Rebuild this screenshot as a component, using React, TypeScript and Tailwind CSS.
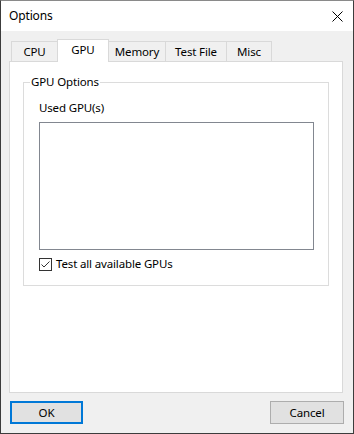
import React from "react";

const tabs = [
  { label: "CPU", cls: "w-[46px] border-l" },
  { label: "GPU", cls: "w-[52px] border-l border-r", active: true },
  { label: "Memory", cls: "w-[57px] border-r" },
  { label: "Test File", cls: "w-[61px] border-r" },
  { label: "Misc", cls: "w-[45px] border-r" },
];

function CloseIcon() {
  return (
    <svg width="11" height="11" viewBox="0 0 11 11" className="block">
      <path d="M0.5 0.5 L10.5 10.5 M10.5 0.5 L0.5 10.5" stroke="#000" strokeWidth="1" fill="none" />
    </svg>
  );
}

function CheckBox() {
  return (
    <span className="flex h-[13px] w-[13px] shrink-0 items-center justify-center border border-[#333333] bg-white">
      <svg width="11" height="11" viewBox="0 0 11 11" className="block">
        <path d="M1.5 5.5 L4 8 L9.5 2.5" stroke="#333333" strokeWidth="1" fill="none" />
      </svg>
    </span>
  );
}

export default function App() {
  return (
    <div
      className="flex h-[434px] w-[354px] flex-col border border-[#3c3c3c] border-t-[#8a8a8a] bg-[#f0f0f0] text-[11.5px] tracking-[-0.15px] text-black"
      style={{ fontFamily: '"Segoe UI", "Noto Sans", sans-serif' }}
    >
      {/* title bar */}
      <div className="flex h-[30px] items-center justify-between bg-white pl-[8px] pr-[10px]">
        <span className="text-[12px]">Options</span>
        <CloseIcon />
      </div>

      <div className="flex flex-1 flex-col pt-[8px]">
        {/* tabs */}
        <div className="flex h-[22px] items-end pl-[10px]">
          {tabs.map((t) =>
            t.active ? (
              <div
                key={t.label}
                className={`relative mb-[-1px] flex h-[23px] items-center justify-center border-t border-[#d9d9d9] bg-white pb-[2px] ${t.cls}`}
              >
                {t.label}
              </div>
            ) : (
              <div
                key={t.label}
                className={`flex h-[20px] items-center justify-center border-t border-[#d9d9d9] bg-[#f0f0f0] pt-[1px] ${t.cls}`}
              >
                {t.label}
              </div>
            )
          )}
        </div>

        {/* tab page */}
        <div className="ml-[8px] h-[332px] w-[334px] border border-[#d9d9d9] bg-white pl-[13px] pt-[20px]">
          <div className="relative h-[204px] w-[306px] border border-[#dcdcdc] pl-[15px] pt-[17px]">
            <span className="absolute left-[6px] top-[-9px] bg-white px-[1px] leading-[16px]">GPU Options</span>
            <div className="mb-[6px] leading-[16px]">Used GPU(s)</div>
            <div className="h-[128px] w-[275px] border border-[#828790] bg-white" />
            <label className="mt-[6px] flex h-[16px] items-center gap-[4px] leading-[16px]">
              <CheckBox />
              <span>Test all available GPUs</span>
            </label>
          </div>
        </div>

        {/* buttons */}
        <div className="flex justify-between px-[9px] pt-[8px]">
          <button className="flex h-[23px] w-[73px] items-center justify-center border-2 border-[#0078d7] bg-[#e1e1e1]">
            OK
          </button>
          <button className="flex h-[23px] w-[74px] items-center justify-center border border-[#adadad] bg-[#e1e1e1]">
            Cancel
          </button>
        </div>
      </div>
    </div>
  );
}
